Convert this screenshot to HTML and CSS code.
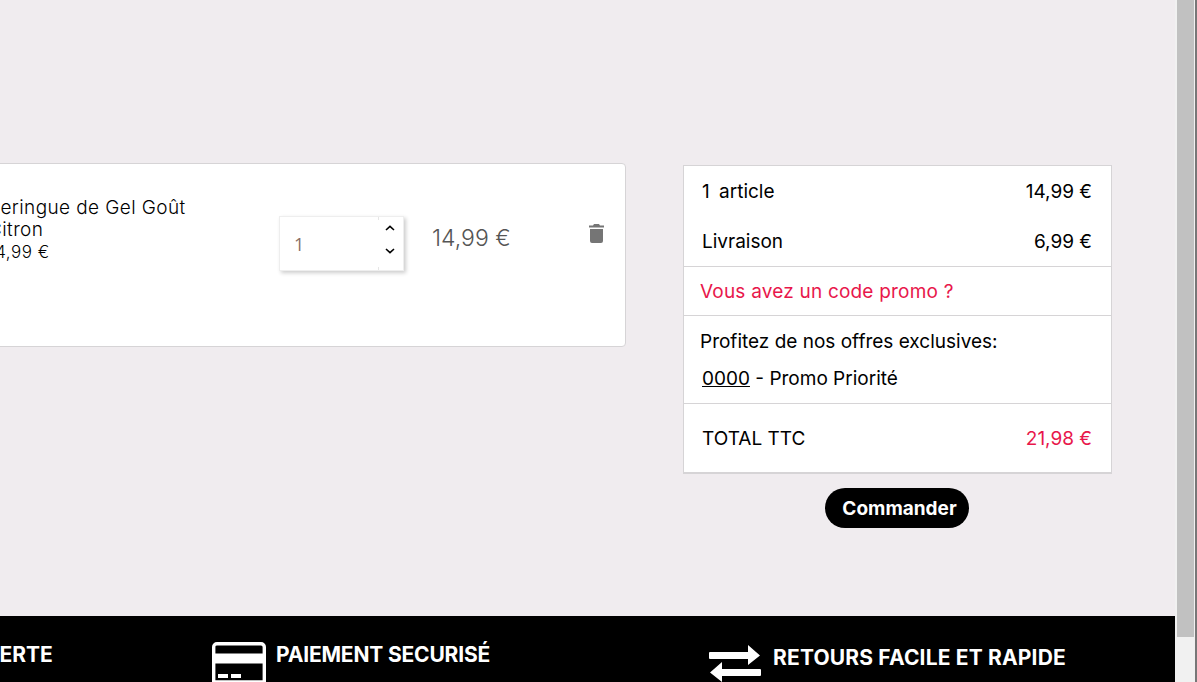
FILE: index.html
```html
<!DOCTYPE html>
<html lang="fr">
<head>
<meta charset="UTF-8">
<meta name="viewport" content="width=device-width, initial-scale=1.0">
<title>Panier</title>
<link rel="stylesheet" href="styles.css">
</head>
<body>
<div class="page">
    <div class="main">
        <div class="content">
            <div class="cart-card">
                <div class="product">
                    <div class="product-name">Seringue de Gel Goût Citron</div>
                    <div class="product-unit">14,99 €</div>
                </div>
                <div class="qty">
                    <span class="qty-value">1</span>
                    <div class="qty-arrows">
                        <svg width="10" height="6" viewBox="0 0 10 6"><path d="M1 5l4-3.6L9 5" fill="none" stroke="#000" stroke-width="1.6"/></svg>
                        <svg width="10" height="6" viewBox="0 0 10 6"><path d="M1 1l4 3.6L9 1" fill="none" stroke="#000" stroke-width="1.6"/></svg>
                    </div>
                </div>
                <div class="line-price">14,99 €</div>
                <svg class="trash" width="15" height="19" viewBox="0 0 15 19"><path d="M5 0h5l1 1.5h4v2.1H0V1.5h4zM1 5h13v12a2 2 0 0 1-2 2H3a2 2 0 0 1-2-2z" fill="#757575"/></svg>
            </div>
            <div class="summary-col">
                <div class="summary">
                    <div class="sum-group first">
                        <div class="sum-row"><span class="sum-label">1 article</span><span>14,99 €</span></div>
                        <div class="sum-row"><span>Livraison</span><span>6,99 €</span></div>
                    </div>
                    <div class="promo-link">Vous avez un code promo ?</div>
                    <div class="offers">
                        <div class="offers-title">Profitez de nos offres exclusives:</div>
                        <div class="offer"><u>0000</u> - Promo Priorité</div>
                    </div>
                    <div class="total"><span>TOTAL TTC</span><span class="total-price">21,98 €</span></div>
                </div>
                <button class="order-btn">Commander</button>
            </div>
        </div>
        <div class="footer">
            <div class="footer-item">
                <div class="footer-icon"></div>
                <div class="footer-text">LIVRAISON OFFERTE</div>
            </div>
            <div class="footer-item payment">
                <svg class="card-icon" width="54" height="40" viewBox="0 0 54 40"><path d="M5 1.7h44a3.3 3.3 0 0 1 3.3 3.3v35H1.7V5A3.3 3.3 0 0 1 5 1.7z" fill="none" stroke="#fff" stroke-width="3.4"/><path d="M2 11.5h50v10H2zM6 32h10v4H6zM19 32h10v4H19z" fill="#fff"/></svg>
                <div class="footer-text">PAIEMENT SECURISÉ</div>
            </div>
            <div class="footer-item returns">
                <svg class="arrows-icon" width="52" height="38" viewBox="0 0 52 38"><path d="M1 7h38V0l12 10.5L39 20v-6H1a1 1 0 0 1-1-1V8a1 1 0 0 1 1-1zM51 24H13v-7L1 27.5 13 37v-6h38a1 1 0 0 0 1-1v-5a1 1 0 0 0-1-1z" fill="#fff"/></svg>
                <div class="footer-text">RETOURS FACILE ET RAPIDE</div>
            </div>
        </div>
    </div>
    <div class="scrollbar"><div class="scroll-thumb"></div></div>
</div>
</body>
</html>
```

FILE: styles.css
```css
* {
    box-sizing: border-box;
}
body {
    margin: 0;
    font-family: Inter, "Liberation Sans", sans-serif;
    color: #000;
}
.page {
    display: flex;
    height: 682px;
    overflow: hidden;
}
.main {
    flex: 1;
    min-width: 0;
    display: flex;
    flex-direction: column;
}
.content {
    height: 616px;
    flex-shrink: 0;
    background-color: #f0ecef;
    display: flex;
    align-items: flex-start;
    padding-top: 163px;
}
.cart-card {
    width: 666px;
    height: 184px;
    margin-left: -40px;
    flex-shrink: 0;
    background-color: #fff;
    border: 1px solid #d6d4d6;
    border-radius: 4px;
    display: flex;
    align-items: flex-start;
    padding-top: 31px;
}
.product {
    width: 280px;
    padding-left: 27px;
    margin-top: 2px;
    flex-shrink: 0;
    margin-right: 38px;
    font-weight: 300;
}
.product-name {
    font-size: 19px;
    letter-spacing: 0.4px;
    line-height: 22px;
    width: 210px;
}
.product-unit {
    font-size: 17px;
    letter-spacing: 0.5px;
    line-height: 22px;
}
.qty {
    position: relative;
    width: 125px;
    height: 55px;
    margin-top: 21px;
    background-color: #fff;
    border: 1px solid #eee;
    box-shadow: 2px 2px 4px rgba(0, 0, 0, 0.2);
    display: flex;
    align-items: center;
    justify-content: space-between;
    padding: 0 8px 0 14px;
    font-family: "Open Sans", sans-serif;
}
/* small ticks left by the spinner column */
.qty::before,
.qty::after {
    content: "";
    position: absolute;
    left: 98px;
    width: 1px;
    height: 3px;
    background-color: #e6e6e6;
}
.qty::before {
    top: 0;
}
.qty::after {
    bottom: 0;
}
.qty-value {
    font-size: 18px;
    color: #8a6f66;
}
.qty-arrows {
    display: flex;
    flex-direction: column;
    gap: 17px;
    margin-bottom: 8px;
}
.qty-arrows svg {
    display: block;
}
.line-price {
    margin-left: 28px;
    margin-top: 29px;
    width: 157px;
    font-size: 23px;
    font-weight: 300;
    line-height: 28px;
    color: #555;
}
.trash {
    margin-top: 29px;
}
.summary-col {
    margin-left: 57px;
    margin-top: 2px;
    width: 429px;
    display: flex;
    flex-direction: column;
    align-items: center;
}
.summary {
    width: 100%;
    height: 309px;
    background-color: #fff;
    border: 1px solid #d6d4d6;
    border-bottom-width: 2px;
    font-size: 19px;
}
.sum-group {
    height: 101px;
    border-bottom: 1px solid #d6d4d6;
    padding: 0 19px 0 18px;
}
.sum-row {
    height: 50px;
    display: flex;
    justify-content: space-between;
    align-items: center;
}
.sum-label {
    word-spacing: 4px;
}
.promo-link {
    height: 49px;
    line-height: 49px;
    padding-left: 16px;
    color: #e8174b;
    letter-spacing: 0.2px;
    border-bottom: 1px solid #d6d4d6;
}
.offers {
    height: 88px;
    border-bottom: 1px solid #d6d4d6;
    padding: 1px 0 0 16px;
}
.offers-title {
    height: 50px;
    line-height: 50px;
}
.offer {
    padding-left: 2px;
    line-height: 24px;
}
.total {
    display: flex;
    justify-content: space-between;
    align-items: center;
    height: 68px;
    padding: 0 19px 0 18px;
}
.total-price {
    color: #e8174b;
}
.order-btn {
    margin-top: 14px;
    margin-right: 1px;
    width: 144px;
    height: 40px;
    border: none;
    border-radius: 20px;
    background-color: #000;
    color: #fff;
    font-family: inherit;
    font-size: 19px;
    font-weight: 700;
    padding: 0 0 0 5px;
}
.footer {
    flex: 1;
    background-color: #000;
    color: #fff;
    display: grid;
    grid-template-columns: 498px 497px 497px;
    margin-left: -286px;
    padding-top: 25px;
}
.footer-item {
    display: flex;
    gap: 10px;
    padding-top: 1px;
}
.footer-icon {
    width: 115px;
}
.footer-text {
    font-size: 21px;
    font-weight: 700;
    line-height: 26px;
    white-space: nowrap;
}
.payment .footer-text {
    letter-spacing: -0.18px;
}
.returns {
    padding-top: 4px;
    gap: 12px;
}
.returns .footer-text {
    letter-spacing: 0.17px;
}
.arrows-icon {
    flex-shrink: 0;
}
.card-icon {
    flex-shrink: 0;
}
.scrollbar {
    width: 22px;
    flex-shrink: 0;
    background-color: #f1f1f1;
    padding-left: 2px;
    border-right: 2px solid #777;
}
.scroll-thumb {
    height: 637px;
    width: 17px;
    background-color: #c1c1c1;
}
```
